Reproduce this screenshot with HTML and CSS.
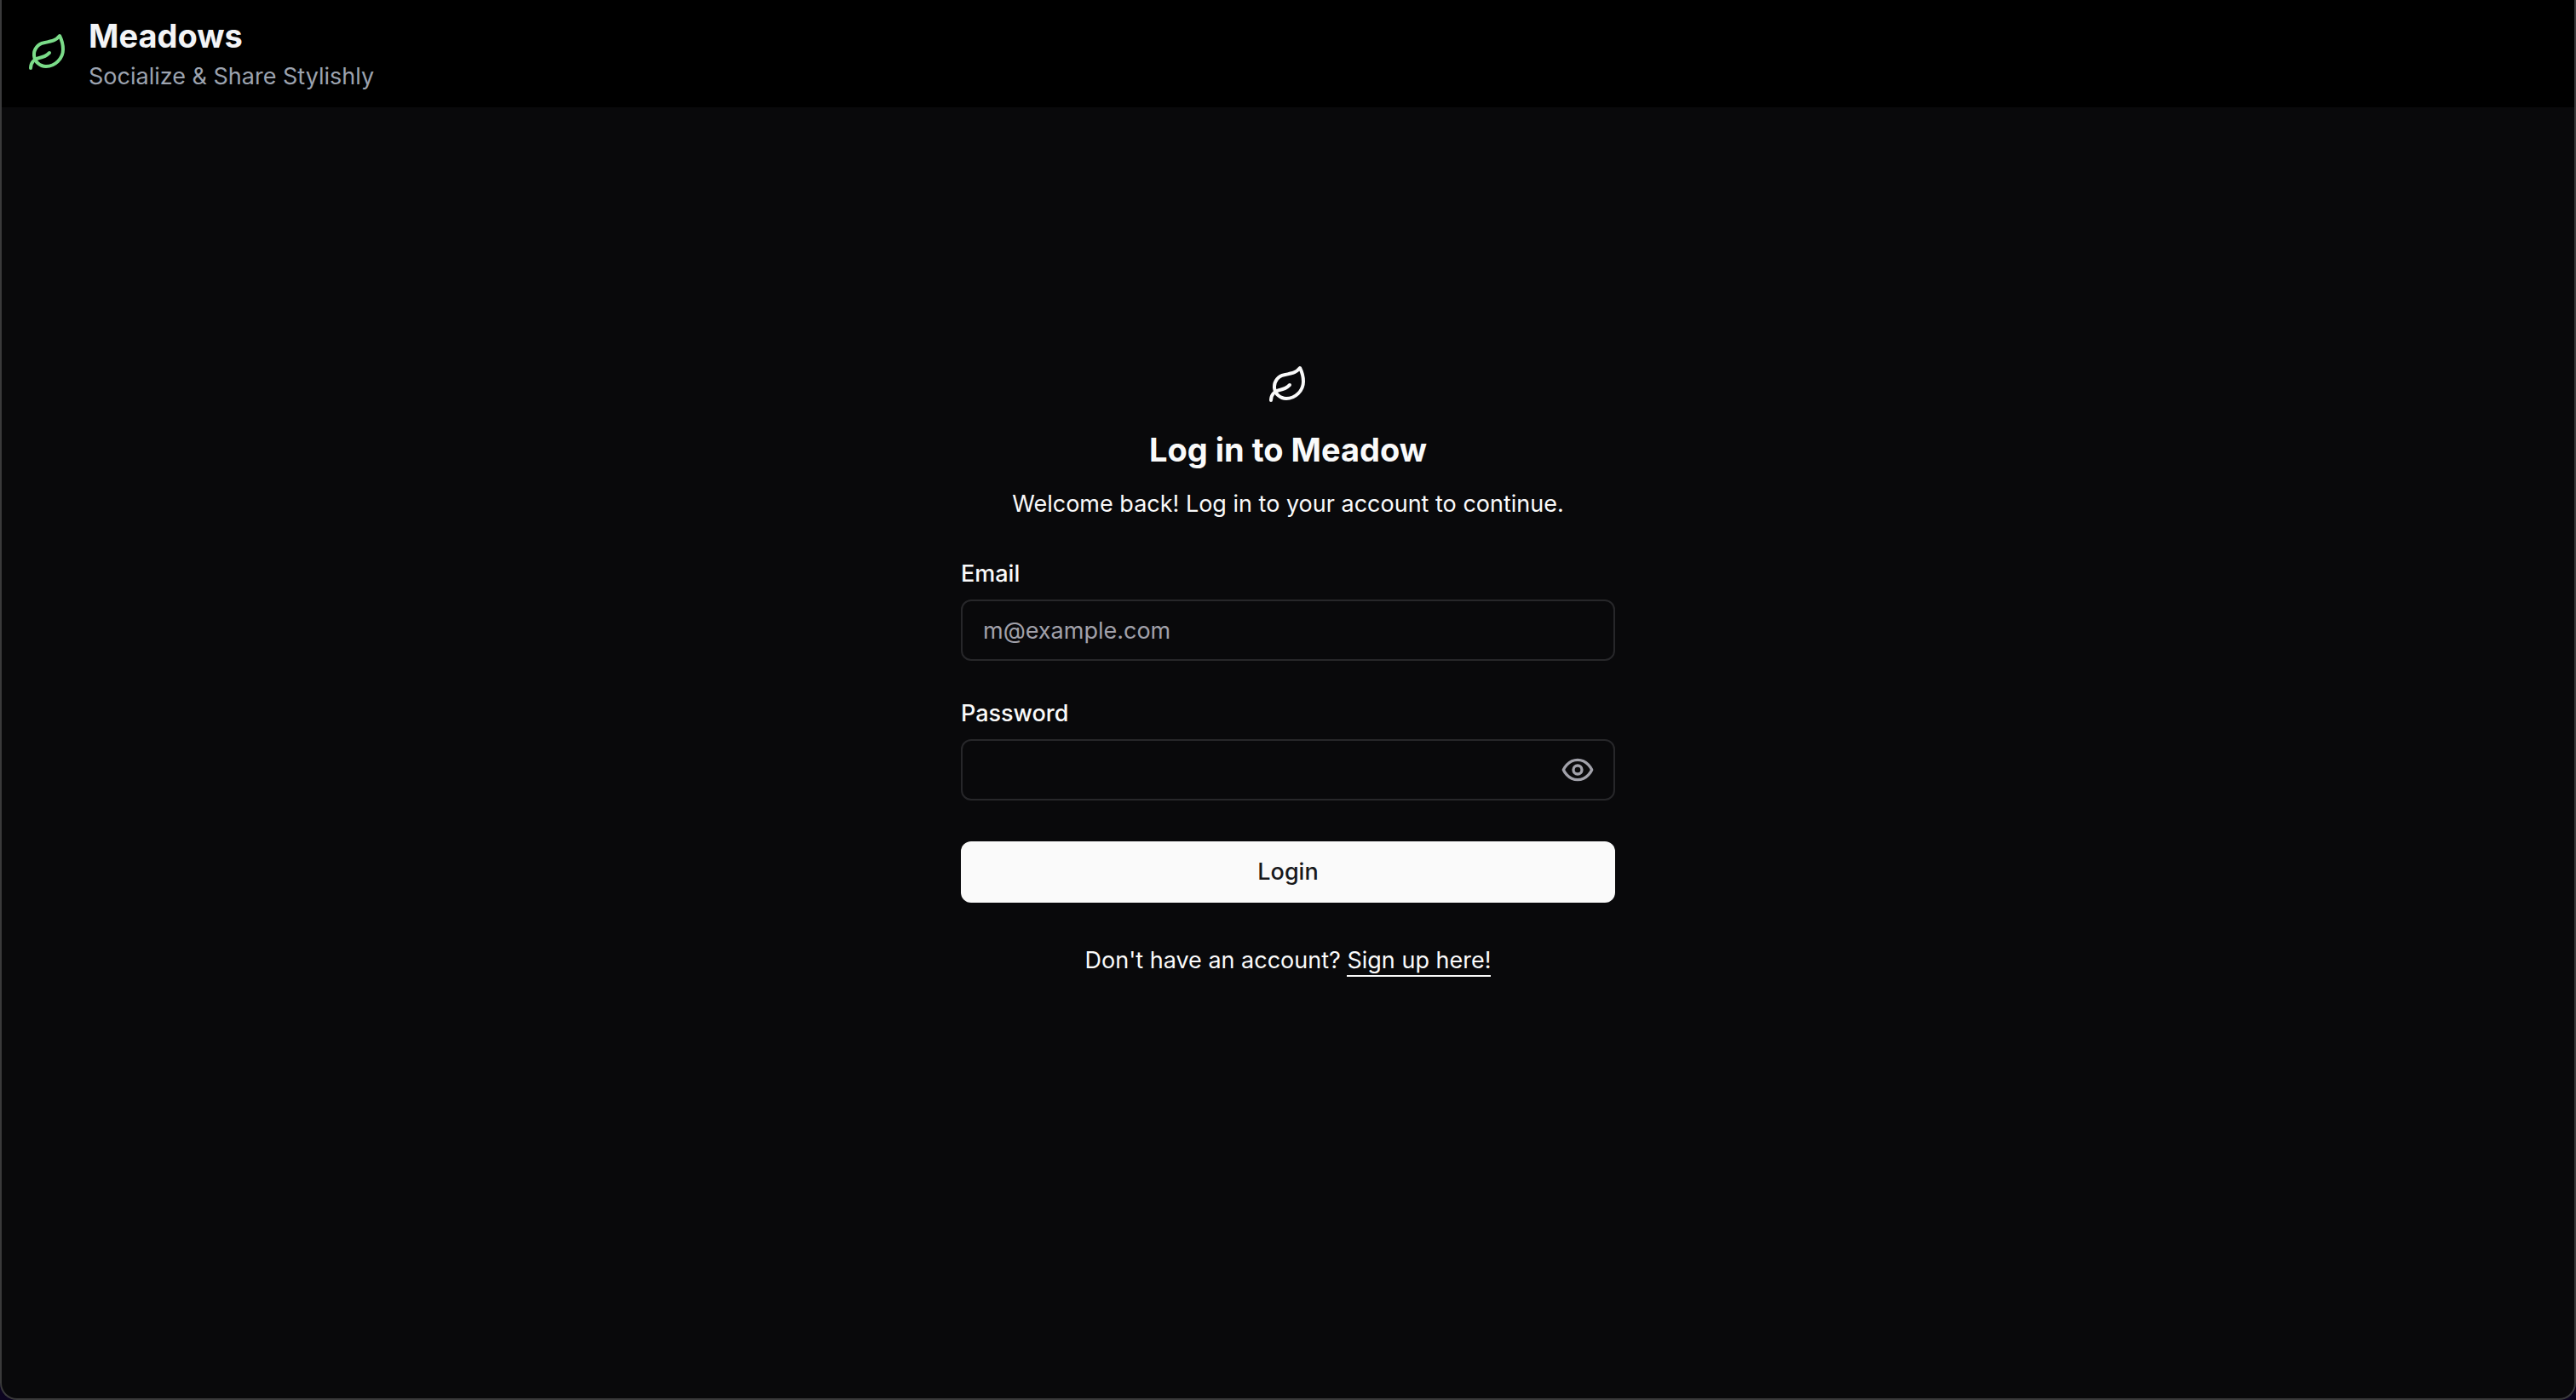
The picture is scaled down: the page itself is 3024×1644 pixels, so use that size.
FILE: index.html
```html
<!DOCTYPE html>
<html lang="en">
<head>
<meta charset="utf-8">
<meta name="viewport" content="width=device-width, initial-scale=1">
<title>Meadows</title>
<link rel="stylesheet" href="styles.css">
</head>
<body>
<div class="window">
  <header class="header">
    <svg class="leaf leaf-green" viewBox="0 0 24 24" aria-hidden="true"><path d="M11 20A7 7 0 0 1 9.8 6.1C15.5 5 17 4.48 19 2c1 2 2 4.18 2 8 0 5.5-4.78 10-10 10Z"/><path d="M2 21c0-3 1.85-5.36 5.08-6C9.5 14.52 12 13 13 12"/></svg>
    <div>
      <div class="title">Meadows</div>
      <p class="tagline">Socialize &amp; Share Stylishly</p>
    </div>
  </header>
  <main class="main">
    <div class="login">
      <svg class="leaf" viewBox="0 0 24 24" aria-hidden="true"><path d="M11 20A7 7 0 0 1 9.8 6.1C15.5 5 17 4.48 19 2c1 2 2 4.18 2 8 0 5.5-4.78 10-10 10Z"/><path d="M2 21c0-3 1.85-5.36 5.08-6C9.5 14.52 12 13 13 12"/></svg>
      <h1 class="title login-title">Log in to Meadow</h1>
      <p class="welcome">Welcome back! Log in to your account to continue.</p>
      <form class="form">
        <div class="field">
          <label for="email">Email</label>
          <input class="input" id="email" type="email" placeholder="m@example.com">
        </div>
        <div class="field">
          <label for="password">Password</label>
          <div class="input password">
            <input class="password-input" id="password" type="password">
            <button class="reveal" type="button" aria-label="Show password">
              <svg class="eye" viewBox="0 0 24 24" aria-hidden="true"><path d="M2 12s3-7 10-7 10 7 10 7-3 7-10 7-10-7-10-7Z"/><circle cx="12" cy="12" r="3"/></svg>
            </button>
          </div>
        </div>
        <button class="submit" type="submit">Login</button>
      </form>
      <p class="signup">Don't have an account? <a href="#signup">Sign up here!</a></p>
    </div>
  </main>
</div>
</body>
</html>
```
FILE: styles.css
```css
* {
  box-sizing: border-box;
  margin: 0;
}

body {
  background: #0c0420;
  color: #fafafa;
  font: 27px/40px Inter, "Liberation Sans", sans-serif;
}

.window {
  display: flex;
  flex-direction: column;
  min-height: 100vh;
  overflow: hidden;
  background: #09090b;
  border: 2px solid #3a3a3b;
  border-top: 0;
  border-radius: 0 0 20px 20px;
}

.header {
  display: flex;
  align-items: center;
  gap: 24px;
  padding: 14px 30px 16px;
  background: #000;
}

.leaf,
.eye {
  display: block;
  width: 48px;
  height: 48px;
  fill: none;
  stroke: currentColor;
  stroke-width: 2;
  stroke-linecap: round;
  stroke-linejoin: round;
}

.leaf-green {
  color: #7bdc89;
}

.title {
  font-size: 38px;
  font-weight: 700;
  line-height: 56px;
}

.header .title {
  color: #f3f4f6;
}

.tagline {
  color: #9ca3af;
}

.main {
  display: flex;
  flex: 1;
  justify-content: center;
  padding: 302px 32px 64px;
}

.login {
  display: flex;
  flex-direction: column;
  align-items: center;
  width: 100%;
  max-width: 768px;
}

.login-title {
  margin-top: 24px;
}

.welcome {
  margin-top: 16px;
}

.form {
  display: flex;
  flex-direction: column;
  gap: 48px;
  width: 100%;
  margin-top: 48px;
}

.field {
  display: flex;
  flex-direction: column;
  gap: 16px;
}

label {
  font-weight: 500;
  line-height: 28px;
}

.input {
  width: 100%;
  height: 72px;
  padding: 0 24px;
  background: transparent;
  border: 2px solid #27272a;
  border-radius: 12px;
  color: inherit;
  font: inherit;
}

.input::placeholder {
  color: #a1a1aa;
  opacity: 1;
}

.password {
  display: flex;
  align-items: center;
  padding-right: 22px;
}

.password-input {
  flex: 1;
  min-width: 0;
  padding: 0;
  background: transparent;
  border: 0;
  color: inherit;
  font: inherit;
}

.reveal {
  padding: 0;
  background: none;
  border: 0;
  color: #a1a1aa;
}

.eye {
  width: 40px;
  height: 40px;
}

.submit {
  height: 72px;
  background: #fafafa;
  border: 0;
  border-radius: 12px;
  color: #18181b;
  font: inherit;
  font-weight: 500;
}

.signup {
  margin-top: 48px;
}

.signup a {
  padding-bottom: 1px;
  border-bottom: 2px solid;
  color: inherit;
  text-decoration: none;
}
```
